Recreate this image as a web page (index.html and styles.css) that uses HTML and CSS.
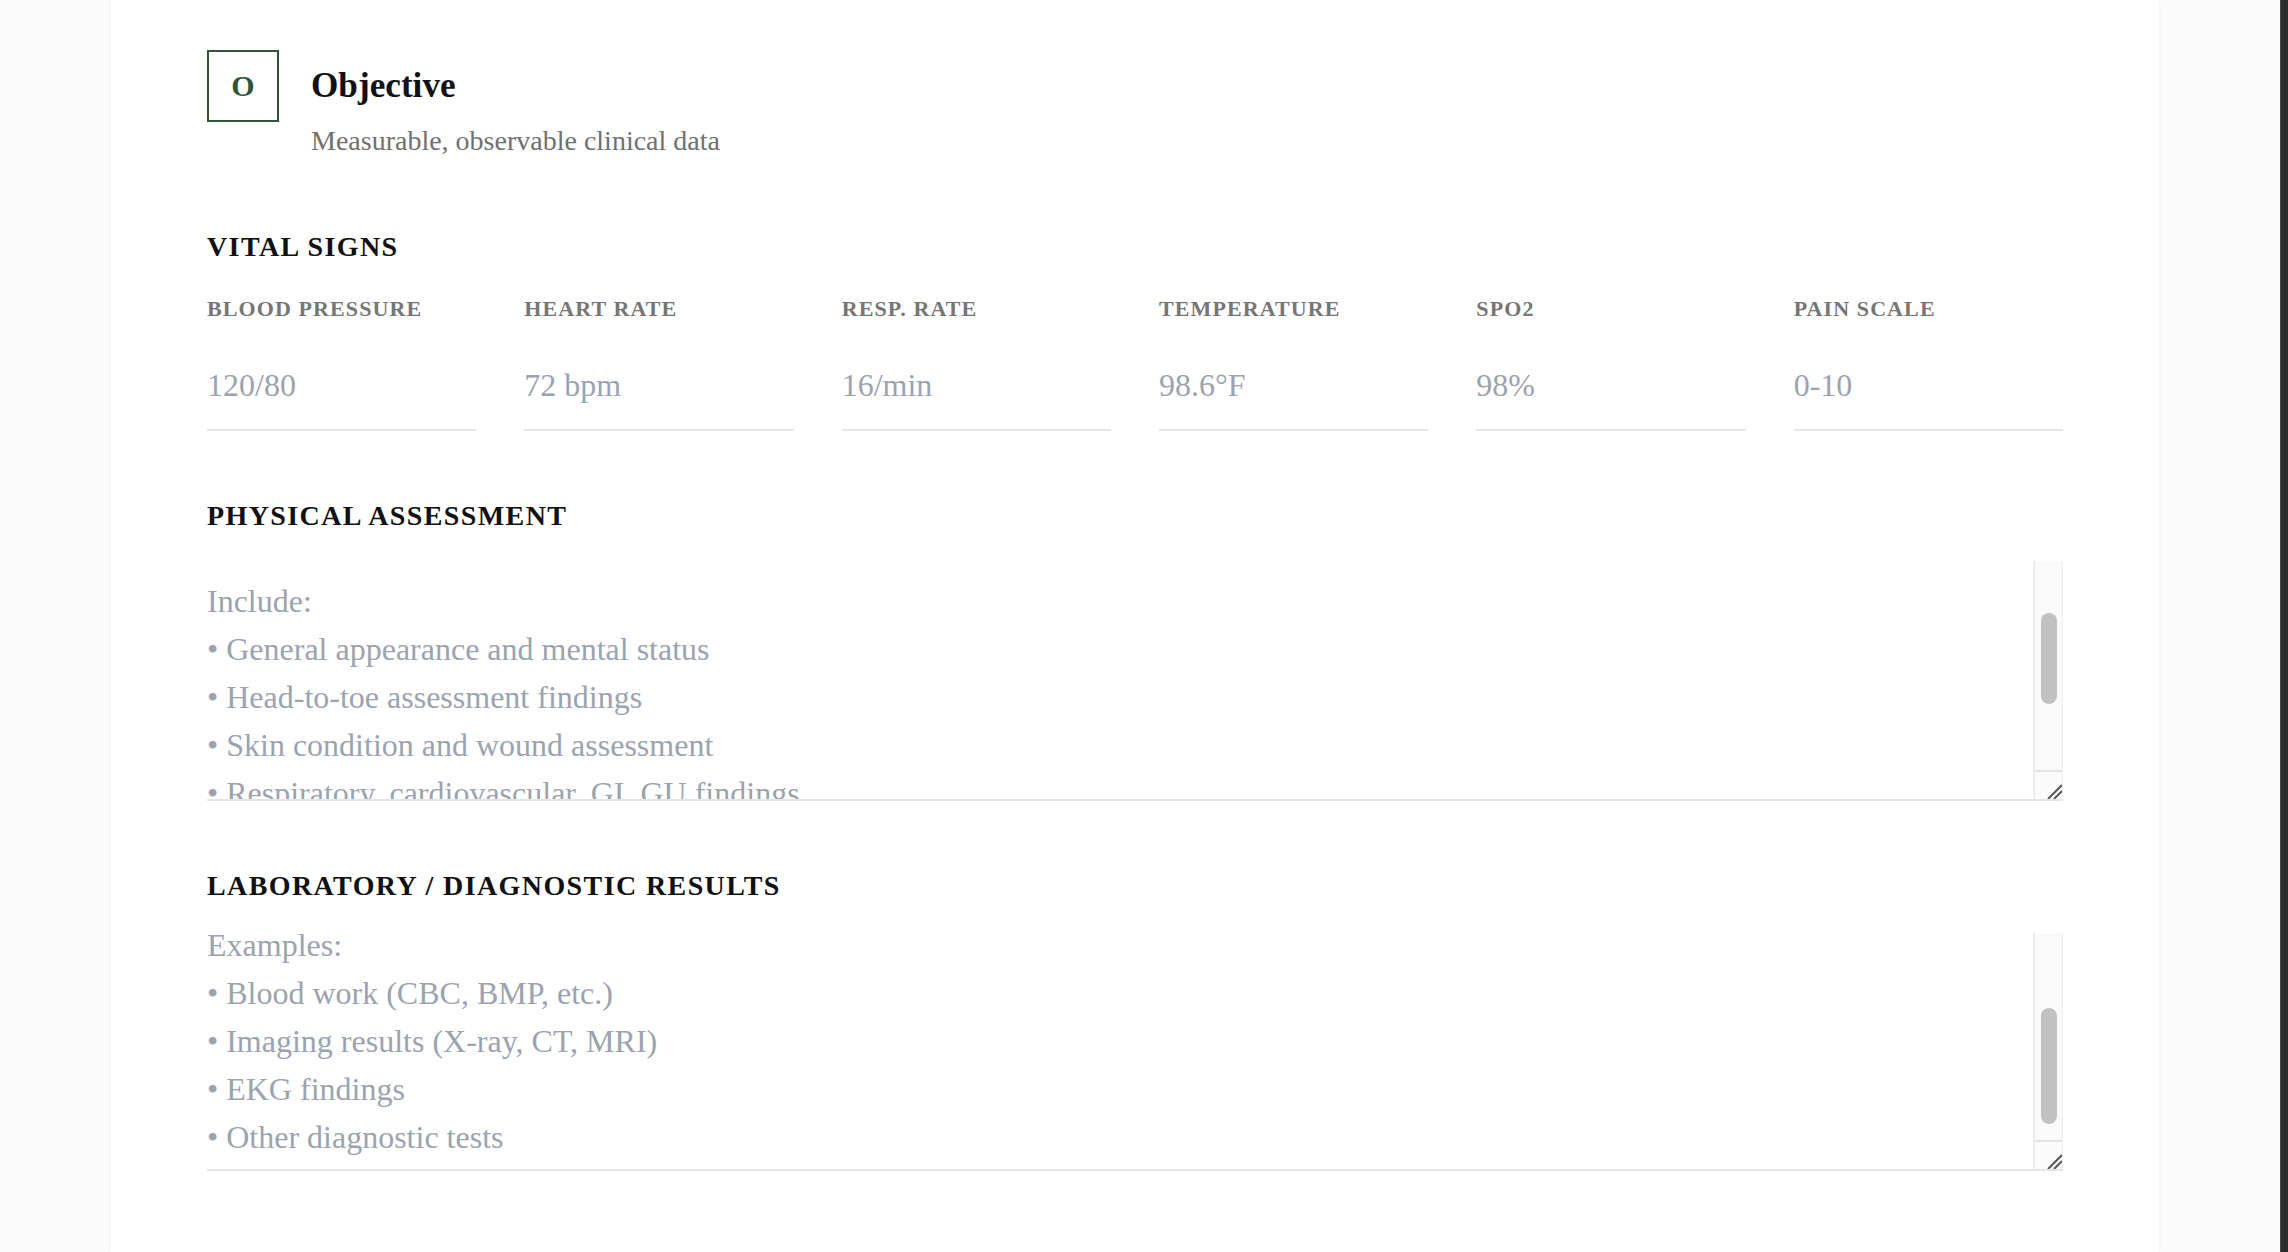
FILE: index.html
```html
<!DOCTYPE html>
<html lang="en">
<head>
<meta charset="utf-8">
<title>SOAP Note – Objective</title>
<link rel="stylesheet" href="styles.css">
</head>
<body>
<div class="page">
  <div class="canvas">
    <main class="sheet">
      <section class="soap-section">
        <header class="section-head">
          <div class="letter-box">O</div>
          <div class="head-text">
            <h2 class="head-title">Objective</h2>
            <p class="head-sub">Measurable, observable clinical data</p>
          </div>
        </header>

        <div class="block">
          <h3 class="block-title">VITAL SIGNS</h3>
          <div class="vitals-grid">
            <label class="vital"><span class="vital-label">BLOOD PRESSURE</span><input class="vital-input" type="text" placeholder="120/80"></label>
            <label class="vital"><span class="vital-label">HEART RATE</span><input class="vital-input" type="text" placeholder="72 bpm"></label>
            <label class="vital"><span class="vital-label">RESP. RATE</span><input class="vital-input" type="text" placeholder="16/min"></label>
            <label class="vital"><span class="vital-label">TEMPERATURE</span><input class="vital-input" type="text" placeholder="98.6°F"></label>
            <label class="vital"><span class="vital-label">SPO2</span><input class="vital-input" type="text" placeholder="98%"></label>
            <label class="vital"><span class="vital-label">PAIN SCALE</span><input class="vital-input" type="text" placeholder="0-10"></label>
          </div>
        </div>

        <div class="block area-block">
          <h3 class="block-title">PHYSICAL ASSESSMENT</h3>
          <div class="area">
            <textarea class="area-input" placeholder="Include:&#10;• General appearance and mental status&#10;• Head-to-toe assessment findings&#10;• Skin condition and wound assessment&#10;• Respiratory, cardiovascular, GI, GU findings&#10;• Neurological and musculoskeletal findings"></textarea>
            <div class="fake-scroll">
              <div class="thumb"></div>
              <div class="fill"></div>
              <div class="resizer">
                <svg width="27" height="27" viewBox="0 0 27 27"><path d="M13 27 L27 13 M19 27 L27 19" stroke="#555" stroke-width="2" fill="none"/></svg>
              </div>
            </div>
          </div>
        </div>

        <div class="block area-block area-block--scrolled">
          <h3 class="block-title">LABORATORY / DIAGNOSTIC RESULTS</h3>
          <div class="area">
            <textarea class="area-input" placeholder="Examples:&#10;• Blood work (CBC, BMP, etc.)&#10;• Imaging results (X-ray, CT, MRI)&#10;• EKG findings&#10;• Other diagnostic tests"></textarea>
            <div class="fake-scroll">
              <div class="thumb"></div>
              <div class="fill"></div>
              <div class="resizer">
                <svg width="27" height="27" viewBox="0 0 27 27"><path d="M13 27 L27 13 M19 27 L27 19" stroke="#555" stroke-width="2" fill="none"/></svg>
              </div>
            </div>
          </div>
        </div>
      </section>
    </main>
  </div>
  <div class="win-scroll"></div>
</div>
</body>
</html>
```

FILE: styles.css
```css
html, body {
  margin: 0;
  height: 100%;
}

body {
  font-family: "Liberation Serif", "Times New Roman", serif;
  background: #fafafa;
  overflow: hidden;
}

.page {
  display: flex;
  height: 100vh;
}

.canvas {
  flex: 1;
  display: flex;
  padding: 0 121px 0 111px;
  background: #fafafa;
  overflow: hidden;
}

.sheet {
  flex: 1;
  background: #ffffff;
  padding: 50px 96px 0;
  box-shadow: 0 0 4px rgba(0, 0, 0, 0.05);
}

.win-scroll {
  width: 7px;
  background: #2c2c2c;
  border-left: 1px solid #474747;
}

/* header */
.section-head {
  display: flex;
  align-items: flex-start;
  gap: 32px;
  margin-bottom: 68px;
}

.letter-box {
  flex: none;
  width: 72px;
  height: 72px;
  box-sizing: border-box;
  border: 2px solid #2f5539;
  display: flex;
  align-items: center;
  justify-content: center;
  font-size: 30px;
  font-weight: 700;
  color: #2f5539;
}

.head-text {
  margin-top: 15px;
}

.head-title {
  margin: 0 0 13px;
  font-size: 35.2px;
  line-height: 1.2;
  font-weight: 700;
  color: #111111;
}

.head-sub {
  margin: 0;
  font-size: 28px;
  line-height: 1.5;
  color: #707070;
}

/* blocks */
.block {
  margin-bottom: 68px;
}

.block-title {
  margin: 0 0 32px;
  font-size: 28px;
  line-height: 1.2;
  font-weight: 700;
  letter-spacing: 1.4px;
  color: #111111;
}

.vitals-grid {
  display: grid;
  grid-template-columns: repeat(6, 1fr);
  gap: 48px;
}

.vital {
  display: flex;
  flex-direction: column;
  min-width: 0;
}

.vital-label {
  font-size: 22px;
  line-height: 1.2;
  font-weight: 700;
  letter-spacing: 1.1px;
  color: #767676;
  margin-bottom: 19px;
}

.vital-input {
  width: 100%;
  height: 90px;
  box-sizing: border-box;
  border: 0;
  border-bottom: 2px solid #e5e5e5;
  padding: 0;
  background: transparent;
  outline: none;
  font-family: "Liberation Serif", "Times New Roman", serif;
  font-size: 32px;
  color: #333333;
}

.vital-input::placeholder,
.area-input::placeholder {
  color: #9ca3af;
  opacity: 1;
}

/* text areas */
.area-block .block-title {
  margin-bottom: 28px;
}

.area-block--scrolled .block-title {
  margin-bottom: 19px;
}

.area {
  display: flex;
  height: 240px;
  box-sizing: border-box;
  border-bottom: 2px solid #e5e5e5;
}

.area-block--scrolled .area {
  height: 250px;
}

.area-input {
  flex: 1;
  min-width: 0;
  border: 0;
  padding: 16px 0 0;
  margin: 0;
  resize: none;
  overflow: hidden;
  outline: none;
  background: transparent;
  font-family: "Liberation Serif", "Times New Roman", serif;
  font-size: 32px;
  line-height: 1.5;
  color: #333333;
}

.area-block--scrolled .area-input {
  padding-top: 0;
}

.fake-scroll {
  flex: none;
  width: 30px;
  box-sizing: border-box;
  background: #fafafa;
  border-left: 2px solid #ececec;
  border-right: 1px solid #efefef;
  display: flex;
  flex-direction: column;
  padding-top: 52px;
}

.area-block--scrolled .fake-scroll {
  margin-top: 12px;
  padding-top: 75px;
}

.thumb {
  flex: none;
  height: 91px;
  margin: 0 5px 0 6px;
  border-radius: 8px;
  background: #c1c1c1;
}

.area-block--scrolled .thumb {
  height: 116px;
}

.fill {
  flex: 1;
}

.resizer {
  flex: none;
  height: 29px;
  box-sizing: border-box;
  border-top: 2px solid #e4e4e4;
  background: #fbfbfb;
  display: flex;
  justify-content: flex-end;
  align-items: flex-end;
}

.resizer svg {
  display: block;
}
```
